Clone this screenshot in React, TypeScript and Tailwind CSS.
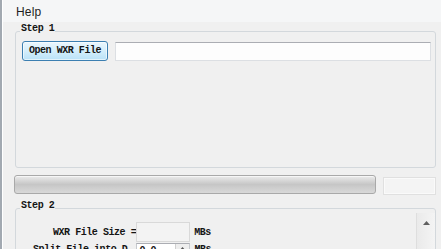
export default function App() {
  return (
    <div className="w-[441px] h-[249px] overflow-hidden bg-[#f0f0f0] border-l-2 border-[#a2a9b1]">
      <div className="h-full border-l border-white flex flex-col font-['Liberation_Mono',monospace] text-[10px] tracking-[-0.45px] font-bold text-[#151515]">
        {/* menu */}
        <div className="h-[22px] shrink-0 bg-[#f5f6f7] pl-[13px] font-['Liberation_Sans',Arial,sans-serif] text-[12px] tracking-[0.2px] font-normal leading-[24px] text-[#1e1e1e]">
          Help
        </div>

        {/* step 1 */}
        <fieldset className="ml-[12px] w-[421px] h-[146px] shrink-0 border border-[#d3d8dc] rounded-[3px] px-[4px]">
          <legend className="px-[1px] pt-[1px] pb-[5px] leading-[12px]">Step 1</legend>
          <div className="flex items-start gap-[7px] ml-[2px]">
            <button className="mt-[1px] w-[86px] h-[20px] rounded-[3px] border border-[#3c7fb1] bg-gradient-to-b from-[#eaf6fd] via-[#d4eefb] to-[#b9e2f8] shadow-[inset_0_0_0_1px_rgba(255,255,255,0.6)] leading-[18px] text-center">
              Open WXR File
            </button>
            <div className="mt-[2px] w-[316px] h-[19px] border border-[#dcdfe3] border-t-[#abadb3] bg-[#fdfdfd]" />
          </div>
        </fieldset>

        {/* progress */}
        <div className="mt-[7px] ml-[11px] flex items-start shrink-0">
          <div className="w-[362px] h-[19px] rounded-[3px] border border-[#a9a9a9] bg-gradient-to-b from-[#ececec] via-[#c6c6c6] to-[#d9d9d9] shadow-[inset_0_1px_0_#f6f6f6]" />
          <div className="ml-[7px] mt-[2px] w-[53px] h-[18px] border border-[#e0e0e0] bg-[#f4f4f4] shadow-[inset_0_0_0_1px_#fafafa]" />
        </div>

        {/* step 2 */}
        <fieldset className="mt-[4px] ml-[12px] w-[421px] flex-1 border border-[#d3d8dc] rounded-[3px] pl-[4px]">
          <legend className="px-[1px] pt-[1px] pb-[5px] leading-[12px]">Step 2</legend>
          <div className="flex h-full">
            <div className="flex-1 pt-[5px]">
              <div className="flex items-center h-[20px] pl-[33px]">
                <span>WXR File Size =</span>
                <div className="w-[54px] h-[20px] border border-[#d9d9d9] bg-[#f3f3f3]" />
                <span className="ml-[4px]">MBs</span>
              </div>
              <div className="flex items-start h-[20px] pl-[13px]">
                <span className="pt-[2px] leading-[12px]">Split File into D</span>
                <div className="ml-[9px] mt-[1px] w-[54px] h-[19px] border border-[#c6c9ce] border-t-[#abadb3] bg-white flex items-start">
                  <span className="pl-[2px] pt-[1px] leading-[12px] flex-1">0.0</span>
                  <div className="w-[14px] h-full border-l border-[#d0d0d0] bg-[#eeeeee] flex justify-center pt-[3px]">
                    <svg width="7" height="4" viewBox="0 0 7 4">
                      <path d="M0 4 L3.5 0 L7 4 Z" fill="#555" />
                    </svg>
                  </div>
                </div>
                <span className="ml-[4px] pt-[2px] leading-[12px]">MBs</span>
              </div>
            </div>
            <div className="-mt-[4px] w-[19px] border-l border-[#dedede] bg-gradient-to-r from-[#eaeaea] to-[#f4f4f4] flex justify-center pt-[8px]">
              <svg width="7" height="4" viewBox="0 0 7 4">
                <path d="M0 4 L3.5 0 L7 4 Z" fill="#5f5f5f" />
              </svg>
            </div>
          </div>
        </fieldset>
      </div>
    </div>
  );
}
